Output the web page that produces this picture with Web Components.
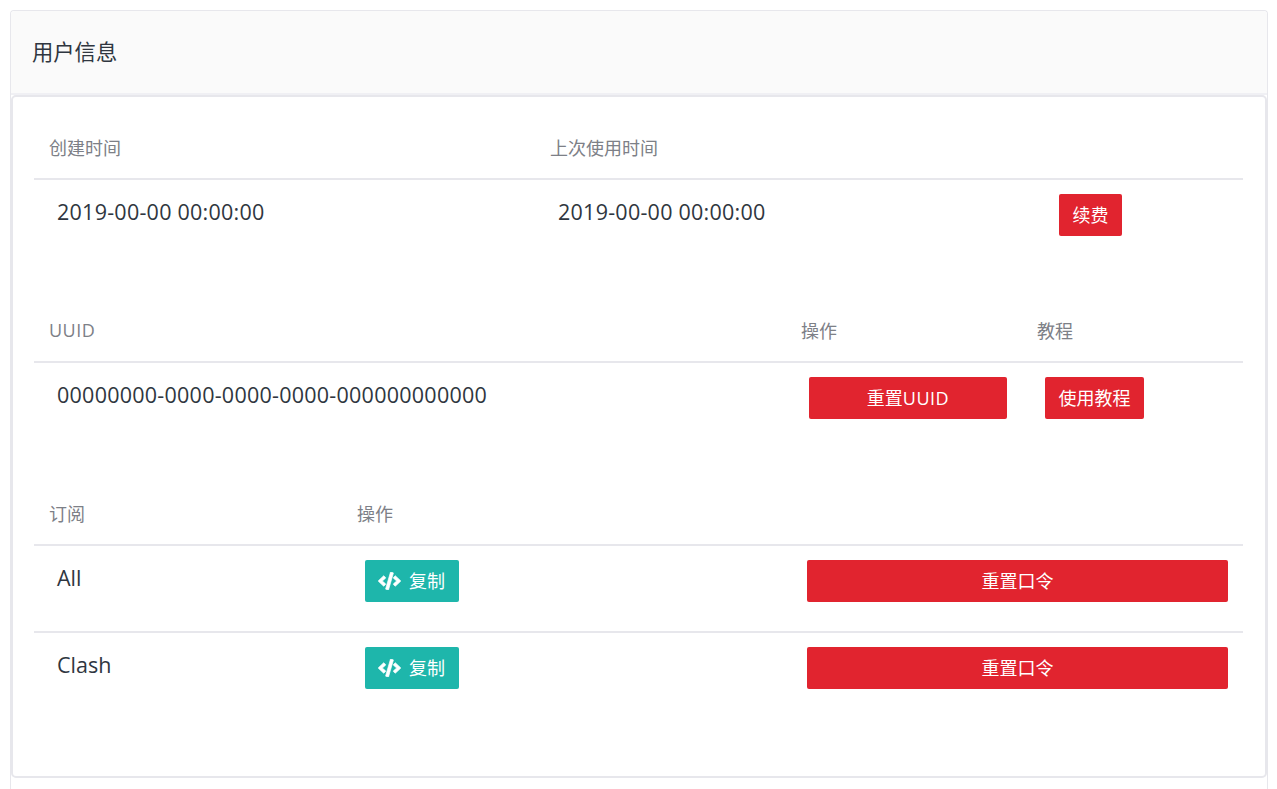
<!DOCTYPE html>
<html lang="zh">
<head>
<meta charset="utf-8">
<title>用户信息</title>
<style>
  html, body { margin: 0; height: 100%; overflow: hidden; background: #fff; }
  body {
    padding: 10px 9px 0 10px;
    box-sizing: border-box;
    font-family: "Open Sans", "Noto Sans CJK SC", sans-serif;
    color: #2f3640;
  }
  .num { letter-spacing: .25px; }
  .latin { letter-spacing: .5px; }
</style>
</head>
<body>
<user-panel heading="用户信息">
  <info-table cols="501px 501px 1fr">
    <info-head>创建时间</info-head>
    <info-head>上次使用时间</info-head>
    <info-head></info-head>
    <info-cell class="num">2019-00-00 00:00:00</info-cell>
    <info-cell class="num">2019-00-00 00:00:00</info-cell>
    <info-cell><red-btn>续费</red-btn></info-cell>
  </info-table>
  <info-table cols="752px 236px 1fr">
    <info-head class="latin">UUID</info-head>
    <info-head>操作</info-head>
    <info-head>教程</info-head>
    <info-cell class="num">00000000-0000-0000-0000-000000000000</info-cell>
    <info-cell><red-btn wide>重置<span class="latin">UUID</span></red-btn></info-cell>
    <info-cell><red-btn>使用教程</red-btn></info-cell>
  </info-table>
  <info-table cols="308px 442px 1fr">
    <info-head>订阅</info-head>
    <info-head>操作</info-head>
    <info-head></info-head>
    <info-cell>All</info-cell>
    <info-cell><copy-btn></copy-btn></info-cell>
    <info-cell><red-btn wide>重置口令</red-btn></info-cell>
    <info-cell divided>Clash</info-cell>
    <info-cell divided><copy-btn></copy-btn></info-cell>
    <info-cell divided><red-btn wide>重置口令</red-btn></info-cell>
  </info-table>
</user-panel>

<script>
function define(name, css, html, setup) {
  customElements.define(name, class extends HTMLElement {
    constructor() {
      super();
      this.attachShadow({ mode: "open" });
      this.shadowRoot.innerHTML = `<style>${css}</style>${html}`;
    }
    connectedCallback() {
      if (setup) setup(this);
    }
  });
}

define("user-panel", `
  :host {
    display: block;
    height: 100%;
    box-sizing: border-box;
    border: 1px solid #e7e7ec;
    border-bottom: 0;
    border-radius: 4px 4px 0 0;
  }
  header {
    height: 78px;
    padding: 0 0 4px 21px;
    display: flex;
    align-items: center;
    background: #fafafa;
    border-bottom: 2px solid #f0f0f4;
    border-radius: 4px 4px 0 0;
    font-size: 21.3px;
    color: #2f3640;
  }
  main {
    height: 683px;
    box-sizing: border-box;
    border: 2px solid #e7e7ec;
    border-radius: 5px;
    padding: 21px 22px 0 21px;
    background: #fff;
  }
`, `<header></header><main><slot></slot></main>`, (el) => {
  el.shadowRoot.querySelector("header").textContent = el.getAttribute("heading");
});

define("info-table", `
  :host { display: grid; margin-bottom: 36px; }
`, `<slot></slot>`, (el) => {
  el.style.gridTemplateColumns = el.getAttribute("cols");
});

define("info-head", `
  :host {
    display: flex;
    align-items: center;
    height: 58px;
    padding: 0 0 2px 15px;
    border-bottom: 2px solid #e7e7ec;
    font-size: 18px;
    color: #7d8087;
  }
`, `<slot></slot>`);

define("info-cell", `
  :host {
    display: block;
    height: 85px;
    box-sizing: border-box;
    padding: 14px 15px 0 23px;
    font-size: 21.5px;
    line-height: 36px;
  }
  :host([divided]) {
    height: 87px;
    border-top: 2px solid #e7e7ec;
  }
`, `<slot></slot>`);

define("red-btn", `
  :host {
    display: inline-flex;
    align-items: center;
    justify-content: center;
    height: 42px;
    padding: 0 13.5px;
    box-sizing: border-box;
    background: #e1242f;
    border-radius: 2px;
    color: #fff;
    font-size: 18px;
    letter-spacing: 0;
    vertical-align: top;
  }
  :host([wide]) { display: flex; }
`, `<slot></slot>`);

define("copy-btn", `
  :host {
    display: inline-flex;
    align-items: center;
    height: 42px;
    padding: 0 14px 0 13px;
    gap: 8px;
    box-sizing: border-box;
    background: #1eb6ab;
    border-radius: 2px;
    color: #fff;
    font-size: 18px;
    vertical-align: top;
  }
  svg { width: 23px; height: 18px; fill: #fff; stroke: #fff; stroke-width: 18; }
`, `<svg viewBox="0 0 640 512"><path d="M278.9 511.5l-61-17.7c-6.4-1.8-10-8.5-8.2-14.9L346.2 8.7c1.8-6.4 8.5-10 14.9-8.2l61 17.7c6.4 1.8 10 8.5 8.2 14.9L293.8 503.3c-1.9 6.4-8.5 10.1-14.9 8.2zm-114-112.2l43.5-46.4c4.6-4.9 4.3-12.7-.8-17.2L117 256l90.6-79.7c5.1-4.5 5.5-12.3.8-17.2l-43.5-46.4c-4.5-4.8-12.1-5.1-17-.5L3.8 247.2c-5.1 4.7-5.1 12.8 0 17.5l144.1 135.1c4.9 4.6 12.5 4.4 17-.5zm327.2.6l144.1-135.1c5.1-4.7 5.1-12.8 0-17.5L492.1 112.1c-4.8-4.5-12.4-4.3-17 .5L431.6 159c-4.6 4.9-4.3 12.7.8 17.2L523 256l-90.6 79.7c-5.1 4.5-5.5 12.3-.8 17.2l43.5 46.4c4.5 4.9 12.1 5.1 17 .6z"/></svg><span>复制</span>`);
</script>
</body>
</html>
